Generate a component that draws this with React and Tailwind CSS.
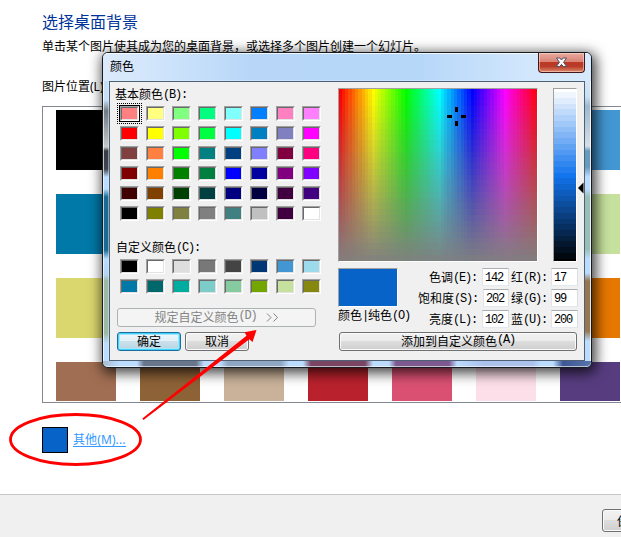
import React from "react";

const BASIC = [
  "#ff8080", "#ffff80", "#80ff80", "#00ff80", "#80ffff", "#0080ff", "#ff80c0", "#ff80ff",
  "#ff0000", "#ffff00", "#80ff00", "#00ff40", "#00ffff", "#0080c0", "#8080c0", "#ff00ff",
  "#804040", "#ff8040", "#00ff00", "#008080", "#004080", "#8080ff", "#800040", "#ff0080",
  "#800000", "#ff8000", "#008000", "#008040", "#0000ff", "#0000a0", "#800080", "#8000ff",
  "#400000", "#804000", "#004000", "#004040", "#000080", "#000040", "#400040", "#400080",
  "#000000", "#808000", "#808040", "#808080", "#408080", "#c0c0c0", "#400040", "#ffffff",
];

const CUSTOM = [
  "#000000", "#ffffff", "#dedede", "#787878", "#444444", "#003875", "#4296d2", "#9bdbec",
  "#0078a8", "#00686b", "#00aba0", "#7ccdc9", "#86cba0", "#75a600", "#c6e19d", "#86870f",
];

const TILES = [
  "#000000", "#dedede", "#787878", "#444444", "#003875", "#dedede", "#4296d2",
  "#0078a8", "#00686b", "#00aba0", "#7ccdc9", "#86cba0", "#75a600", "#c6e19d",
  "#dad76f", "#86870f", "#e0c000", "#f0b000", "#f6a000", "#e88a30", "#e67700",
  "#a06e52", "#8d6237", "#cab29a", "#b9222d", "#da5072", "#fddfea", "#573d80",
];

const range = (n) => Array.from({ length: n }, (_, i) => i);

/* Latin run set on the 6px half-width cell of a 12px CJK bitmap face */
function Half({ children }) {
  return (
    <span className="relative -top-px font-['Liberation_Mono'] text-[12px] leading-none tracking-[-1.2px]">
      {children}
    </span>
  );
}

function Swatches({ colors, focused }) {
  return (
    <div className="grid w-[201px] grid-cols-[repeat(8,19px)] gap-x-[7px] gap-y-[5px]">
      {colors.map((c, i) => (
        <div
          key={i}
          className="relative h-[15px] w-[19px] border border-t-[#a0a0a0] border-r-white border-b-white border-l-[#a0a0a0]"
        >
          <div
            className="h-full w-full border border-t-[#696969] border-r-[#e3e3e3] border-b-[#e3e3e3] border-l-[#696969]"
            style={{ backgroundColor: c }}
          />
          {focused && i === 0 && (
            <>
              <div className="absolute -inset-x-[2px] -inset-y-[2px] border border-black" />
              <div className="absolute -top-[4px] -right-[4px] -bottom-[4px] -left-[4px] border border-dotted border-black" />
            </>
          )}
        </div>
      ))}
    </div>
  );
}

function Spectrum() {
  return (
    <div className="h-[174px] w-[200px] border border-t-[#a0a0a0] border-r-white border-b-white border-l-[#a0a0a0]">
      <svg width="198" height="172" className="block" shapeRendering="crispEdges">
        {range(60).map((x) =>
          range(30).map((y) => (
            <rect
              key={x + "-" + y}
              x={Math.floor(x * 3.3)}
              y={Math.floor(y * 5.74)}
              width="4"
              height="6"
              fill={`hsl(${x * 6} ${((30 - y) / 30) * 100}% 50%)`}
            />
          ))
        )}
        <path d="M116 18h3v5h-3z M116 32h3v5h-3z M108 26h5v3h-5z M122 26h5v3h-5z" fill="#000" />
      </svg>
    </div>
  );
}

function Luminance() {
  return (
    <div className="h-[174px] w-[24px] border border-t-[#a0a0a0] border-r-white border-b-white border-l-[#a0a0a0]">
      <svg width="22" height="172" className="block" shapeRendering="crispEdges">
        {range(31).map((y) => (
          <rect
            key={y}
            x="0"
            y={y === 0 ? 0 : Math.floor(y * 5.74) - 2}
            width="22"
            height="6"
            fill={`hsl(213 86% ${((30 - y) / 30) * 100}%)`}
          />
        ))}
      </svg>
    </div>
  );
}

function Field({ label, k, value, wide }) {
  return (
    <div className="flex h-[18px] items-center justify-end">
      <span className="whitespace-nowrap">
        {label}
        <Half>({k}):</Half>
      </span>
      <span
        className={
          "h-[18px] w-[27px] border border-t-[#abadb3] border-r-[#dbdfe6] border-b-[#e3e9ef] border-l-[#e2e3ea] bg-white pl-[2px] leading-[15px] " +
          (wide ? "ml-[5px]" : "ml-[4px]")
        }
      >
        <Half>{value}</Half>
      </span>
    </div>
  );
}

function Button({ children, className }) {
  return (
    <button
      className={
        "flex h-[19px] items-center justify-center rounded-[3px] border pb-px whitespace-nowrap leading-none " + className
      }
    >
      {children}
    </button>
  );
}

const NORMAL =
  "border-[#707070] bg-[linear-gradient(#f2f2f2_0%,#ebebeb_49%,#dddddd_50%,#cfcfcf_100%)] shadow-[inset_0_0_0_1px_#fafafa]";

function ColorDialog() {
  return (
    <section className="absolute top-[52px] left-[102px] flex h-[316px] w-[490px] flex-col overflow-visible rounded-[6px] border border-[#161b22] bg-[#bcdcfc] text-black shadow-[2px_3px_13px_2px_rgba(0,0,0,0.75)]">
      <header className="flex h-[28px] shrink-0 items-start justify-between rounded-t-[5px] border-t border-white/80 bg-[linear-gradient(90deg,#dceafb_0%,#cfe4fb_12%,#b8d7f8_30%,#b7d7f9_65%,#d3e7fc_88%,#d7e9fc_100%)] pr-[6px] pl-[7px]">
        <h2 className="text-[12px] leading-[24px]">颜色</h2>
        <button
          aria-label="关闭"
          className="-mt-px flex h-[20px] w-[47px] items-center justify-center rounded-b-[4px] border border-t-0 border-[#43161a] bg-[linear-gradient(#e9aaa0_0%,#d98476_45%,#bd3925_50%,#b83a28_70%,#dc8b6a_100%)] shadow-[inset_0_0_0_1px_rgba(255,220,210,0.55)]"
        >
          <svg width="13" height="11" viewBox="0 0 13 11">
            <path
              d="M1.5 1h3.3l1.7 2 1.7-2h3.3L8.6 5.3l3.1 4.2H8.3L6.5 7.4 4.7 9.5H1.3l3.1-4.2z"
              fill="#f8f8f8"
              stroke="#505060"
              strokeWidth="1"
            />
          </svg>
        </button>
      </header>
      <div className="flex h-[280px] shrink-0">
        <div className="w-[6px] shrink-0 border-l border-white/70 bg-[linear-gradient(#c8dff6_0px,#c8dff6_19px,#727a80_30px,#c4c8ca_66px,#363c40_70px,#40464c_88px,#bbdcfd_96px,#bbdcfd_108px,#176b94_116px,#176b94_169px,#bbdcfd_178px,#b2d4f2_194px,#9bb8a3_200px,#9bb8a3_252px,#bbdcfd_262px)]" />
        <main className="flex w-[476px] shrink-0 items-start border border-[#4e6073] bg-[#f0f0f0] text-[12px] shadow-[0_0_0_0.5px_#d8edff]">
          <div className="flex w-[200px] shrink-0 flex-col pt-[5px] ml-[7px]">
            <div className="h-[19px] leading-[14px] -ml-[2px]">
              基本颜色<Half>(B):</Half>
            </div>
            <div className="pl-[3px]">
              <Swatches colors={BASIC} focused />
            </div>
            <div className="mt-[19px] h-[19px] leading-[14px] -ml-px">
              自定义颜色<Half>(C):</Half>
            </div>
            <div className="pl-[3px]">
              <Swatches colors={CUSTOM} />
            </div>
            <Button className="mt-[14px] w-[199px] border-[#adb2b5] bg-[#f4f4f4] text-[#838383]">
              规定自定义颜色<Half>(D)&nbsp;</Half>
              <svg width="13" height="9" className="ml-[3px]" fill="none" stroke="#838383">
                <path d="M1 .5l4 4-4 4M7.500.5l4 4-4 4" />
              </svg>
            </Button>
            <div className="mt-[5px] flex gap-[4px]">
              <Button className="w-[64px] border-[#1c6f9c] bg-[linear-gradient(#eef7fb_0%,#e2f0f7_48%,#cbe0ec_50%,#b9d3e2_100%)] shadow-[inset_0_0_0_1px_#3fd0fb,inset_0_0_0_2px_#a5e6fb]">
                确定
              </Button>
              <Button className={"w-[64px] " + NORMAL}>取消</Button>
            </div>
          </div>
          <div className="ml-[21px] flex w-[246px] shrink-0 flex-col pt-[6px]">
            <div className="flex items-start">
              <Spectrum />
              <div className="ml-[15px]">
                <Luminance />
              </div>
              <svg width="7" height="12" className="mt-[94px] block shrink-0">
                <path d="M1 6L6.500 .5v11z" fill="#000" />
              </svg>
            </div>
            <div className="mt-[6px] flex h-[60px]">
              <div className="w-[80px] shrink-0">
                <div className="h-[39px] w-[60px] border border-t-[#a0a0a0] border-r-white border-b-white border-l-[#a0a0a0] bg-[#0763c7]" />
                <div className="leading-[16px] whitespace-nowrap">
                  颜色<Half>|</Half>纯色<Half>(O)</Half>
                </div>
              </div>
              <div className="flex w-[91px] shrink-0 flex-col gap-[3px]">
                <Field label="色调" k="E" value="142" wide />
                <Field label="饱和度" k="S" value="202" wide />
                <Field label="亮度" k="L" value="102" wide />
              </div>
              <div className="flex w-[69px] shrink-0 flex-col gap-[3px]">
                <Field label="红" k="R" value="17" />
                <Field label="绿" k="G" value="99" />
                <Field label="蓝" k="U" value="200" />
              </div>
            </div>
            <Button className={"mt-[4px] ml-px w-[238px] " + NORMAL}>
              添加到自定义颜色<Half>(A)</Half>
            </Button>
          </div>
        </main>
        <div className="w-[6px] shrink-0 border-r border-white/80 bg-[linear-gradient(#d2e6fb_0px,#c9dff2_16px,#9db9d0_25px,#bfd0de_50px,#d4e0e9_65px,#679abf_70px,#679abf_86px,#bbdcfd_96px,#bbdcfd_108px,#99beb7_116px,#99beb7_168px,#bbdcfd_178px,#bbdcfd_192px,#987650_200px,#987650_250px,#bbdcfd_260px)]" />
      </div>
      <div className="grow rounded-b-[5px] border-b border-white/60 bg-[linear-gradient(90deg,#a8b9cc_0px,#bbdcfd_16px,#bbdcfd_34px,#69758a_41px,#69758a_93px,#bbdcfd_101px,#bbdcfd_117px,#8fa7c3_125px,#8fa7c3_178px,#bbdcfd_186px,#bbdcfd_200px,#794563_208px,#794563_262px,#bbdcfd_270px,#bbdcfd_286px,#7d5990_293px,#7d5990_346px,#bbdcfd_354px,#adc1ed_380px,#adc1ed_430px,#bbdcfd_438px,#bbdcfd_450px,#3e5694_460px,#5874ab_488px)]" />
    </section>
  );
}

export default function App() {
  return (
    <div className="relative flex h-[537px] w-[621px] flex-col overflow-hidden bg-white font-['Noto_Sans_CJK_SC',sans-serif] text-[12px] text-black">
      <div className="flex h-[494px] shrink-0 flex-col pl-[42px]">
        <h1 className="mt-[9px] h-[24px] text-[16px] leading-[24px] text-[#003399]">选择桌面背景</h1>
        <p className="mt-[5px] h-[16px] leading-[16px] whitespace-nowrap">
          单击某个图片使其成为您的桌面背景，或选择多个图片创建一个幻灯片。
        </p>
        <p className="mt-[25px] h-[16px] leading-[16px] font-['Noto_Sans','Noto_Sans_CJK_SC',sans-serif]">图片位置(L)</p>
        <div className="mt-[11px] grid h-[297px] w-[600px] shrink-0 grid-cols-[repeat(7,60px)] auto-rows-[60px] content-start gap-[24px] overflow-hidden border border-[#828790] pt-[3px] pl-[13px]">
          {TILES.map((c, i) => (
            <div key={i} className={i > 20 ? "h-[39px]" : "h-[60px]"} style={{ backgroundColor: c }} />
          ))}
        </div>
        <div className="mt-[24px] flex h-[26px] items-center gap-[5px]">
          <div className="h-[26px] w-[26px] border border-black bg-[#0763c7]" />
          <a className="border-b border-[#3399ff] font-['Noto_Sans','Noto_Sans_CJK_SC',sans-serif] text-[12px] leading-[12px] tracking-[0.1px] text-[#3399ff]">
            其他(M)...
          </a>
        </div>
      </div>
      <footer className="flex h-[43px] shrink-0 border-t border-[#c8c8c8] bg-[#f0f0f0] pt-[14px] pl-[602px]">
        <button className="flex h-[23px] w-[80px] shrink-0 items-center rounded-[3px] border border-[#707070] bg-[linear-gradient(#f2f2f2_0%,#ebebeb_49%,#dddddd_50%,#cfcfcf_100%)] pl-[14px] whitespace-nowrap shadow-[inset_0_0_0_1px_#fafafa]">
          保存修改
        </button>
      </footer>
      <ColorDialog />
      <svg width="621" height="537" className="pointer-events-none absolute inset-0">
        <ellipse cx="75.500" cy="439.500" rx="65" ry="25" fill="none" stroke="#f00" strokeWidth="2.800" />
        <path d="M142.300 418.600L246.500 335.800L244.600 332.200L256.500 330L252.500 342L249.300 339.300L143.500 420Z" fill="#f00" />
      </svg>
    </div>
  );
}
